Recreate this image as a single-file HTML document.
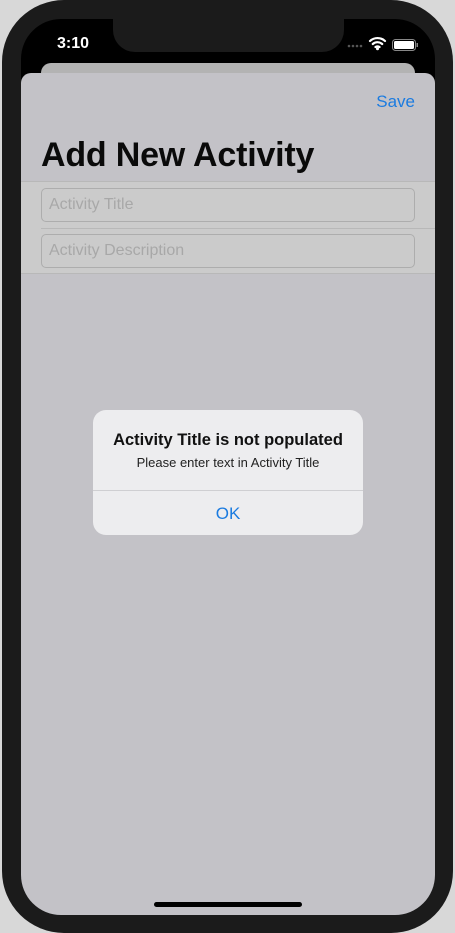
<!DOCTYPE html>
<html><head><meta charset="utf-8"><style>
*{margin:0;padding:0;box-sizing:border-box}
html,body{width:455px;height:933px;overflow:hidden;background:#d8d8d8;font-family:"Liberation Sans",sans-serif}
.frame{position:absolute;left:2px;top:0;width:451px;height:933px;background:#1b1b1b;border-radius:62px}
.screen{position:absolute;left:21px;top:19px;width:414px;height:896px;background:#000;border-radius:40px;overflow:hidden}
.notch{position:absolute;left:113px;top:19px;width:231px;height:33px;background:#1b1b1b;border-radius:0 0 22px 22px}
.time{position:absolute;left:57px;top:35px;color:#fff;font-size:16px;font-weight:bold}
.back{position:absolute;left:41px;top:63px;width:374px;height:30px;background:#b3b3b3;border-radius:10px}
.sheet{position:absolute;left:21px;top:73px;width:414px;height:842px;background:#c3c2c7;border-radius:10px 10px 40px 40px;overflow:hidden}
.save{position:absolute;right:20px;top:19px;color:#1b7be0;font-size:17px}
h1{position:absolute;left:20px;top:63px;font-size:34px;font-weight:bold;color:#0a0a0a;letter-spacing:-0.2px}
.fields{position:absolute;left:0;top:108px;width:414px;height:93px;background:#cbcbcb;border-top:1px solid #b8b8b8;border-bottom:1px solid #b8b8b8}
.sep{position:absolute;left:20px;right:0;top:46px;height:1px;background:#b8b8b8}
.f{position:absolute;left:20px;width:374px;height:34px;border:1px solid #adadad;border-radius:5px;color:#a8a8a8;font-size:16px;padding:7px 7px}
.home{position:absolute;left:154px;top:902px;width:148px;height:5px;background:#000;border-radius:3px}
.alert{position:absolute;left:93px;top:410px;width:270px;height:125px;background:#ededef;border-radius:13px;text-align:center}
.at{position:absolute;top:21px;width:100%;font-size:16.5px;font-weight:bold;color:#111}
.am{position:absolute;top:45px;width:100%;font-size:13px;color:#222}
.al{position:absolute;top:80px;left:0;width:100%;height:1px;background:#cfcfd2}
.ok{position:absolute;top:94px;width:100%;font-size:17px;color:#1b7be0}
</style></head><body>
<div class="frame"></div>
<div class="screen"></div>
<div class="notch"></div>
<div class="time">3:10</div>
<svg style="position:absolute;left:346px;top:35px" width="74" height="18">
<g fill="#555"><circle cx="3" cy="11" r="1.3"/><circle cx="7" cy="11" r="1.3"/><circle cx="11" cy="11" r="1.3"/><circle cx="15" cy="11" r="1.3"/></g>
<path d="M24 6a11 11 0 0 1 15 0M26.8 9a7 7 0 0 1 9.4 0M29.5 12a3.2 3.2 0 0 1 4 0" stroke="#fff" stroke-width="2.2" fill="none" stroke-linecap="round"/>
<circle cx="31.5" cy="13.8" r="1.5" fill="#fff"/>
<rect x="46.5" y="4.5" width="23" height="11" rx="3" fill="none" stroke="#888" stroke-width="1"/>
<rect x="48" y="6" width="20" height="8" rx="1.5" fill="#fff"/>
<rect x="70.5" y="8" width="1.5" height="4" fill="#888"/>
</svg>
<div class="back"></div>
<div class="sheet">
<div class="save">Save</div>
<h1>Add New Activity</h1>
<div class="fields">
<div class="f" style="top:6px">Activity Title</div>
<div class="sep"></div>
<div class="f" style="top:52px">Activity Description</div>
</div>
</div>
<div class="home"></div>
<div class="alert">
<div class="at">Activity Title is not populated</div>
<div class="am">Please enter text in Activity Title</div>
<div class="al"></div>
<div class="ok">OK</div>
</div>
</body></html>
